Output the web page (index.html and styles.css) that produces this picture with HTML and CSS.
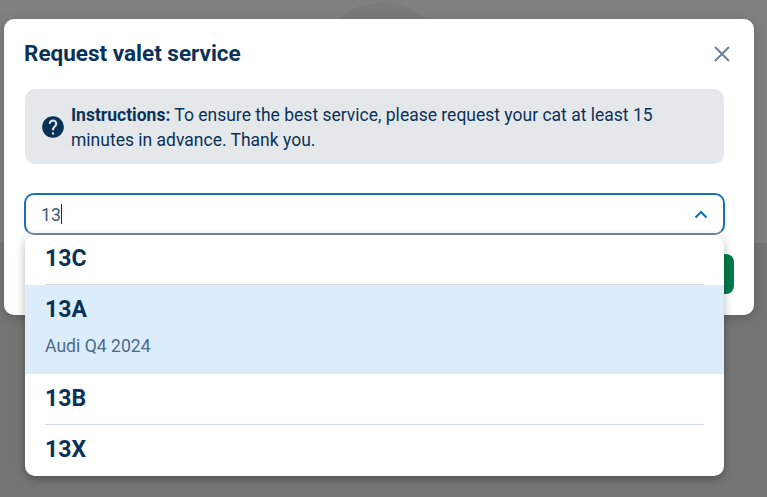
FILE: index.html
```html
<!DOCTYPE html>
<html lang="en">
	<head>
		<title>Request valet service</title>
		<meta charset="UTF-8" />
		<link rel="stylesheet" href="styles.css">
	</head>
	<body>
		<div class="backdrop">
			<div class="backdrop-circle"></div>
			<div class="backdrop-lower"></div>
		</div>
		<div class="modal">
			<div class="modal-header">
				<h2 class="title">Request valet service</h2>
				<button class="close-button" type="button" aria-label="Close">
					<svg width="16" height="16" viewBox="0 0 16 16">
						<path d="M1 1 L15 15 M15 1 L1 15" fill="none" stroke="#6a8299" stroke-width="2"/>
					</svg>
				</button>
			</div>
			<div class="notice">
				<svg class="notice-icon" width="26" height="26" viewBox="0 0 24 24">
					<path fill="#0a3259" d="M12 2C6.48 2 2 6.48 2 12s4.48 10 10 10 10-4.48 10-10S17.52 2 12 2zm1 17h-2v-2h2v2zm2.07-7.75l-.9.92C13.45 12.9 13 13.5 13 15h-2v-.5c0-1.1.45-2.1 1.17-2.83l1.24-1.26c.37-.36.59-.86.59-1.41 0-1.1-.9-2-2-2s-2 .9-2 2H8c0-2.21 1.79-4 4-4s4 1.79 4 4c0 .88-.36 1.68-.93 2.25z"/>
				</svg>
				<p class="notice-text"><strong>Instructions:</strong> To ensure the best service, please request your cat at least 15 minutes in advance. Thank you.</p>
			</div>
			<div class="combo">
				<div class="combo-input">
					<span class="combo-value">13</span><span class="caret"></span>
					<svg class="chevron" width="14" height="9" viewBox="0 0 14 9">
						<path d="M1.5 7.5 L7 2 L12.5 7.5" fill="none" stroke="#0b72b9" stroke-width="2"/>
					</svg>
				</div>
				<div class="submit-button"></div>
				<!-- Dropdown list -->
				<ul class="options">
					<li class="option option-first option-lined">
						<div class="option-name">13C</div>
					</li>
					<li class="option option-active">
						<div class="option-name">13A</div>
						<div class="option-sub">Audi Q4 2024</div>
					</li>
					<li class="option option-lined">
						<div class="option-name">13B</div>
					</li>
					<li class="option option-last">
						<div class="option-name">13X</div>
					</li>
				</ul>
			</div>
		</div>
	</body>
</html>
```

FILE: styles.css
```css
body {
	margin: 0;
	height: 497px;
	overflow: hidden;
	position: relative;
	background-color: #808080;
	font-family: Roboto, "Liberation Sans", sans-serif;
	color: #0a3259;
}

.backdrop {
	position: absolute;
	inset: 0;
	overflow: hidden;
}

.backdrop-circle {
	position: absolute;
	left: 316px;
	top: 3px;
	width: 132px;
	height: 132px;
	border-radius: 50%;
	background-color: #7a7a7a;
}

.backdrop-lower {
	position: absolute;
	left: 0;
	right: 0;
	top: 243px;
	bottom: 0;
	background-color: #757575;
}

.modal {
	position: relative;
	margin: 19px 13px 0 4px;
	height: 296px;
	box-sizing: border-box;
	padding: 19px 30px 0 21px;
	background-color: white;
	border-radius: 10px;
	box-shadow: 0 3px 12px rgba(0, 0, 0, 0.2);
}

.modal-header {
	display: flex;
	justify-content: space-between;
	align-items: center;
	height: 30px;
	margin: 0 -6px 0 -1px;
}

.title {
	margin: 0;
	font-size: 22.5px;
	font-weight: 700;
	line-height: 30px;
}

.close-button {
	display: flex;
	padding: 0;
	margin-top: 2px;
	border: none;
	background: none;
}

.notice {
	display: flex;
	align-items: center;
	gap: 5px;
	margin-top: 21px;
	height: 75px;
	box-sizing: border-box;
	padding: 0 40px 0 15px;
	background-color: #e5e8eb;
	border-radius: 10px;
}

.notice-text {
	margin: 2px 0 0;
	font-size: 17.5px;
	line-height: 25px;
}

.notice-icon {
	flex: none;
}

.combo {
	position: relative;
	margin-top: 29px;
}

.combo-input {
	display: flex;
	align-items: center;
	height: 42px;
	box-sizing: border-box;
	margin: 0 -1px;
	padding: 0 15px;
	border: 2px solid #1a71b0;
	border-bottom-color: #7b8b9b;
	border-radius: 10px;
	font-size: 17.6px;
	color: #3d5a78;
}

.combo-value {
	padding-top: 2px;
}

.caret {
	width: 1px;
	height: 20px;
	background-color: #0a3259;
}

.chevron {
	margin-left: auto;
}

.submit-button {
	position: absolute;
	right: -10px;
	top: 61px;
	width: 60px;
	height: 40px;
	background-color: #007a4d;
	border-radius: 8px;
}

.options {
	position: absolute;
	left: 0;
	right: 0;
	top: 42px;
	margin: 0;
	padding: 0;
	list-style: none;
	background-color: white;
	border-radius: 10px;
	box-shadow: 0 3px 10px rgba(0, 0, 0, 0.3);
	overflow: hidden;
}

.option {
	padding: 0 20px;
}

.option-name {
	font-size: 23px;
	font-weight: 700;
	line-height: 50px;
}

.option-lined .option-name {
	border-bottom: 1px solid #d3d9df;
}

.option-first .option-name {
	line-height: 47px;
	padding-bottom: 2px;
}

.option-active {
	background-color: #dbedfb;
	padding-bottom: 16px;
}

.option-active .option-name {
	line-height: 49px;
}

.option-last {
	padding-bottom: 1px;
}

.option-sub {
	padding-top: 1px;
	font-size: 17.6px;
	line-height: 23px;
	color: #4d6b8a;
}
```
